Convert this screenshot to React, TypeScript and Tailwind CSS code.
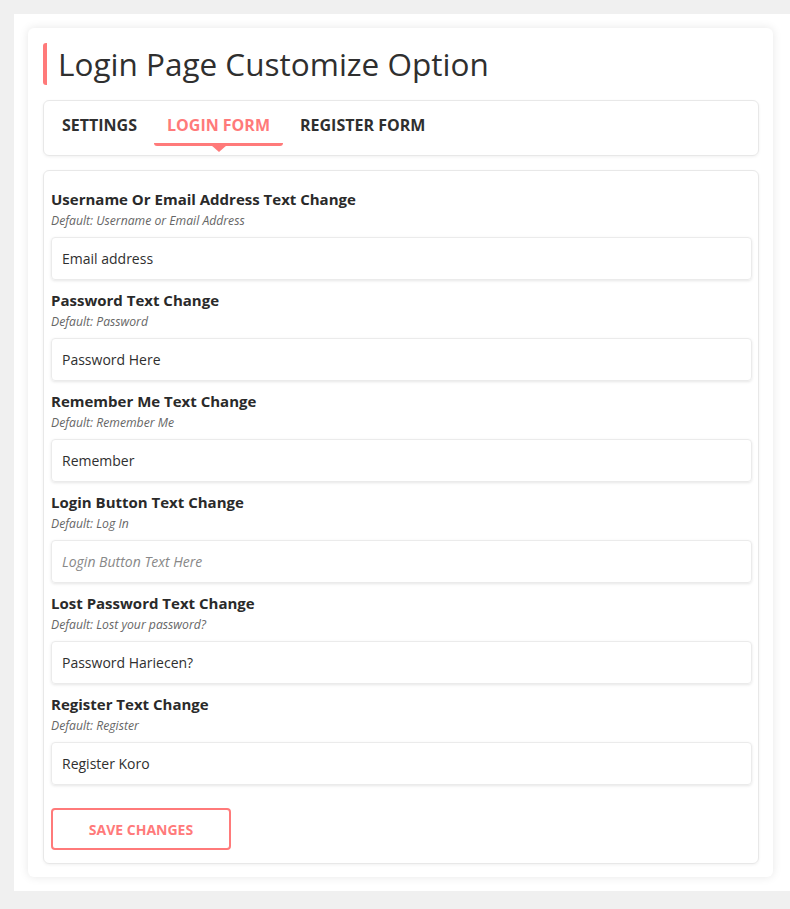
import React from "react";

const fields = [
  { label: "Username Or Email Address Text Change", hint: "Default: Username or Email Address", value: "Email address" },
  { label: "Password Text Change", hint: "Default: Password", value: "Password Here" },
  { label: "Remember Me Text Change", hint: "Default: Remember Me", value: "Remember" },
  { label: "Login Button Text Change", hint: "Default: Log In", value: "", placeholder: "Login Button Text Here" },
  { label: "Lost Password Text Change", hint: "Default: Lost your password?", value: "Password Hariecen?" },
  { label: "Register Text Change", hint: "Default: Register", value: "Register Koro" },
];

export default function App() {
  return (
    <div className="min-h-[909px] bg-[#f0f0f0] pt-[14px] pl-[14px] font-['Open_Sans',sans-serif] text-[#2c2c2c]">
      <div className="bg-white p-[14px] pr-[17px]">
        <div className="rounded-md bg-white pl-[15px] pr-[14px] pt-[15px] pb-[13px] shadow-[0_0_10px_rgba(0,0,0,0.1)]">
          <div className="flex h-[42px] items-center border-l-4 border-[#ff7a7a] rounded-l-[3px] pl-[11px]">
            <h1 className="text-[31.5px] font-medium leading-none text-[#2f2f2f]">Login Page Customize Option</h1>
          </div>

          <div className="mt-[15px] flex h-[56px] items-center rounded-md border border-[#e8e8e8] px-[4px] pb-[6px] shadow-[0_1px_3px_rgba(0,0,0,0.06)]">
            <button className="px-[14px] text-[16px] font-bold text-[#2f2f2f]">SETTINGS</button>
            <div className="relative mx-[3px]">
              <button className="px-[13px] text-[16px] font-bold text-[#ff7a7a]">LOGIN FORM</button>
              <div className="absolute left-0 right-0 top-[30px] h-[3px] rounded-b-[3px] bg-[#ff7a7a]" />
              <div className="absolute left-1/2 top-[32px] h-0 w-0 -translate-x-1/2 border-x-[8px] border-t-[7px] border-x-transparent border-t-[#ff7a7a]" />
            </div>
            <button className="px-[14px] text-[16px] font-bold text-[#2f2f2f]">REGISTER FORM</button>
          </div>

          <div className="mt-[14px] rounded-md border border-[#e8e8e8] pl-[7px] pr-[6px] pt-[16px] pb-[13px] shadow-[0_1px_3px_rgba(0,0,0,0.06)]">
            <div className="flex flex-col gap-[8px]">
              {fields.map((f) => (
                <div key={f.label}>
                  <div className="text-[15px] font-bold leading-[24px] text-[#2a2a2a]">{f.label}</div>
                  <div className="text-[12.2px] italic leading-[20px] text-[#666]">{f.hint}</div>
                  <input
                    className="mt-[6px] h-[43px] w-full rounded-[4px] border border-[#ebebeb] px-[10px] text-[14px] text-[#2f2f2f] shadow-[0_1px_3px_rgba(0,0,0,0.1)] outline-none placeholder:italic placeholder:text-[#888]"
                    defaultValue={f.value}
                    placeholder={f.placeholder}
                  />
                </div>
              ))}
            </div>
            <button className="mt-[23px] h-[42px] w-[180px] rounded-[4px] border-2 border-[#ff7a7a] text-[14px] font-bold text-[#ff7a7a]">
              SAVE CHANGES
            </button>
          </div>
        </div>
      </div>
    </div>
  );
}
